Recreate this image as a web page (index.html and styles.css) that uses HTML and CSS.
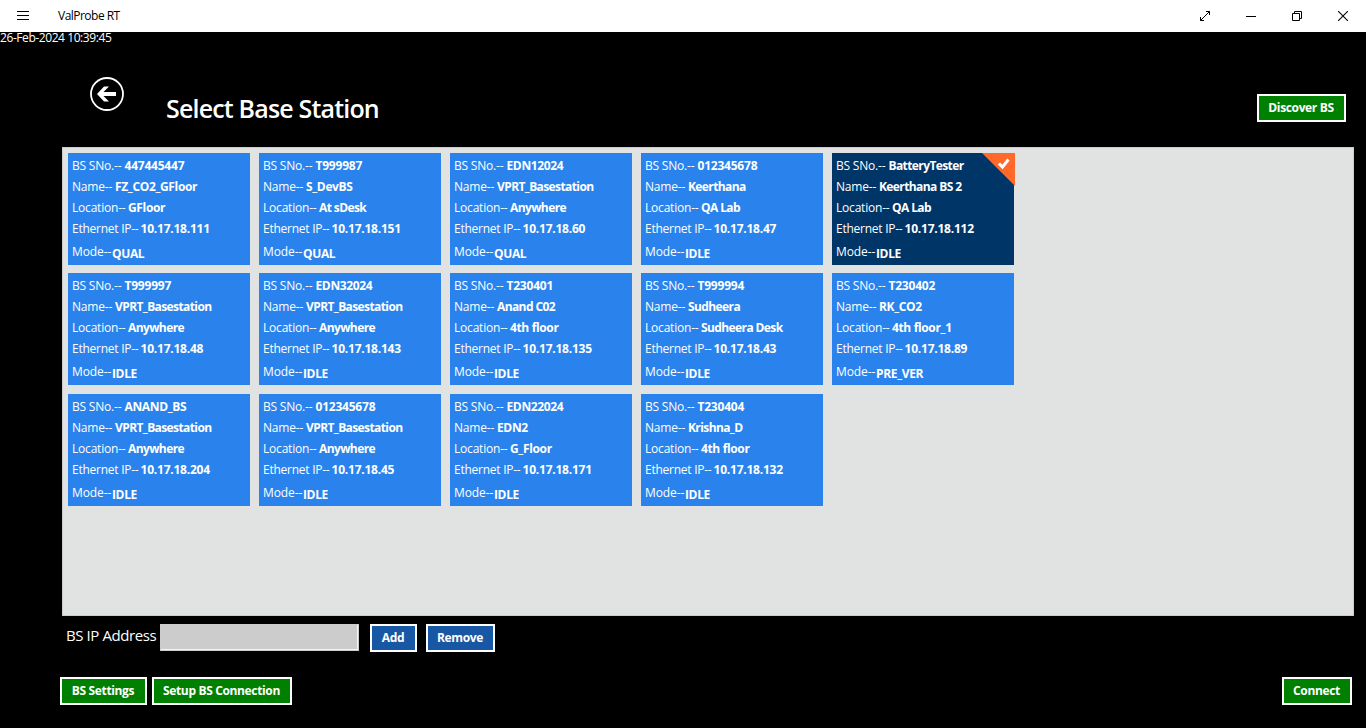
FILE: index.html
```html
<!DOCTYPE html>
<html lang="en">
<head>
<meta charset="utf-8">
<title>ValProbe RT</title>
<link rel="stylesheet" href="styles.css">
</head>
<body>
<header class="titlebar">
  <svg class="menu" width="12" height="10" viewBox="0 0 12 10" shape-rendering="crispEdges"><path d="M0 .5H12M0 4.5H12M0 8.5H12" stroke="#000"/></svg>
  <span class="app-name">ValProbe RT</span>
  <div class="window-controls">
    <svg width="10" height="10" viewBox="0 0 10 10" fill="none" stroke="#000"><path d="M.5 9.5 9.5.5M6 .5H9.5V4M.5 6V9.5H4"/></svg>
    <svg width="10" height="10" viewBox="0 0 10 10" stroke="#000" shape-rendering="crispEdges"><path d="M0 5.5H10"/></svg>
    <svg width="10" height="10" viewBox="0 0 10 10" fill="none" stroke="#000"><path d="M.5 2.5H7.5V9.5H.5ZM2.5 2.5V.5H9.5V7.5H7.5"/></svg>
    <svg width="10" height="10" viewBox="0 0 10 10" stroke="#000" stroke-width="1.1"><path d="M0 0 10 10M10 0 0 10"/></svg>
  </div>
</header>
<main>
  <div class="clock">26-Feb-2024 10:39:45</div>
  <div class="heading">
    <svg class="back" width="34" height="34" viewBox="0 0 34 34"><circle cx="17" cy="17" r="16" fill="none" stroke="#fff" stroke-width="1.8"/><path d="M7 17 14 9.5H19L13.5 15H26V19H13.5L19 24.5H14Z" fill="#fff"/></svg>
    <h1>Select Base Station</h1>
    <button class="btn green discover">Discover BS</button>
  </div>
  <section class="panel" id="stations"></section>
  <div class="address">
    <label for="ip">BS IP Address</label>
    <input id="ip" type="text">
    <button class="btn blue add">Add</button>
    <button class="btn blue remove">Remove</button>
  </div>
  <footer>
    <button class="btn green settings">BS Settings</button>
    <button class="btn green setup">Setup BS Connection</button>
    <button class="btn green connect">Connect</button>
  </footer>
</main>
<script src="stations.js"></script>
</body>
</html>
```
FILE: styles.css
```css
* { box-sizing: border-box; }
body { margin: 0; width: 1366px; height: 728px; overflow: hidden; background: #000; color: #fff; font-family: "Open Sans", "Noto Sans", sans-serif; font-size: 12px; }
svg { display: block; flex: none; }
.titlebar { height: 32px; background: #fff; color: #000; display: flex; align-items: center; padding-left: 17px; }
.app-name { margin: -1px 0 0 29px; font-size: 12px; letter-spacing: -.52px; }
.window-controls { margin-left: auto; display: flex; gap: 36px; padding-right: 18px; }
.clock { height: 16px; line-height: 12px; letter-spacing: -.42px; white-space: nowrap; }
.heading { height: 99px; display: flex; align-items: flex-start; padding: 29px 20px 0 90px; }
h1 { margin: 13px 0 0 42px; font-size: 25px; line-height: 36px; font-weight: 600; letter-spacing: -.82px; white-space: nowrap; }
.btn { height: 28px; border: 2px solid #fff; padding: 0 1px 0 0; font: 700 12px/22px "Open Sans", "Noto Sans", sans-serif; letter-spacing: -.35px; color: #fff; white-space: nowrap; }
.green { background: #008000; }
.blue { background: #1857a4; }
.discover { width: 89px; margin: 17px 0 0 auto; }
.panel { width: 1292px; height: 469px; margin-left: 62px; background: #e1e3e2; border: 1px solid #cbcdcc; display: grid; grid-template-columns: repeat(6, 182px); grid-auto-rows: 112px; gap: 8.4px 9px; padding: 5px; align-content: start; }
.card { position: relative; background: #2a83ec; padding: 2px 4px; white-space: nowrap; }
.card.selected { background: #003568; }
.row { display: flex; height: 21px; line-height: 21px; letter-spacing: -.2px; }
.row b { font-weight: 700; letter-spacing: -.6px; }
.row b.numeric { letter-spacing: -.22px; }
.row b.code { letter-spacing: -.35px; }
.sno span { width: 52.5px; }
.name span { width: 43px; }
.location span { width: 56px; }
.ip span { width: 68.5px; letter-spacing: -.25px; }
.mode { padding-top: 2px; }
.mode span { width: 40px; letter-spacing: -.1px; }
.mode b { padding-top: 2px; line-height: 21px; }
.check { position: absolute; top: 0; right: -1px; }
.address { height: 61px; display: flex; align-items: flex-start; padding: 8px 0 0 66px; }
.address label { width: 94px; font-size: 15px; line-height: 22px; letter-spacing: -.42px; white-space: nowrap; }
.address input { width: 199px; height: 27px; background: #ccc; border: 1px solid #ccc; box-shadow: inset -1px -1px #f4f4f4; padding: 0; }
.add { width: 47px; margin-left: 11px; }
.remove { width: 69px; margin-left: 9px; }
footer { display: flex; padding: 0 14px 0 60px; gap: 5px; }
.settings { width: 87px; }
.setup { width: 140px; }
.connect { width: 70px; margin-left: auto; }
```
FILE: stations.js
```js
const stations = [
  ["447445447", "FZ_CO2_GFloor", "GFloor", "10.17.18.111", "QUAL"],
  ["T999987", "S_DevBS", "At sDesk", "10.17.18.151", "QUAL"],
  ["EDN12024", "VPRT_Basestation", "Anywhere", "10.17.18.60", "QUAL"],
  ["012345678", "Keerthana", "QA Lab", "10.17.18.47", "IDLE"],
  ["BatteryTester", "Keerthana BS 2", "QA Lab", "10.17.18.112", "IDLE"],
  null,
  ["T999997", "VPRT_Basestation", "Anywhere", "10.17.18.48", "IDLE"],
  ["EDN32024", "VPRT_Basestation", "Anywhere", "10.17.18.143", "IDLE"],
  ["T230401", "Anand C02", "4th floor", "10.17.18.135", "IDLE"],
  ["T999994", "Sudheera", "Sudheera Desk", "10.17.18.43", "IDLE"],
  ["T230402", "RK_CO2", "4th floor_1", "10.17.18.89", "PRE_VER"],
  null,
  ["ANAND_BS", "VPRT_Basestation", "Anywhere", "10.17.18.204", "IDLE"],
  ["012345678", "VPRT_Basestation", "Anywhere", "10.17.18.45", "IDLE"],
  ["EDN22024", "EDN2", "G_Floor", "10.17.18.171", "IDLE"],
  ["T230404", "Krishna_D", "4th floor", "10.17.18.132", "IDLE"]
];
const fields = [["sno", "BS SNo.--"], ["name", "Name--"], ["location", "Location--"], ["ip", "Ethernet IP--"], ["mode", "Mode--"]];
const selected = 4;
const check = '<svg class="check" width="33" height="33" viewBox="0 0 33 33"><path d="M0 0H33V33Z" fill="#ff6a2b"/><path d="M17 10.5 20.5 14 26.5 6.5" fill="none" stroke="#fff" stroke-width="3"/></svg>';
const textClass = s => /^[A-Z]?[\d.]+$/.test(s) ? "numeric" : /^([A-Z\d_]+|\d.*|[A-Z]+_.*|FZ.*|GFloor)$/.test(s) && !s.startsWith("VPRT") ? "code" : "";
document.getElementById("stations").innerHTML = stations.map((s, i) => s
  ? `<article class="card${i === selected ? " selected" : ""}">` +
    fields.map(([key, label], f) => `<div class="row ${key}"><span>${label}</span><b class="${textClass(s[f])}">${s[f]}</b></div>`).join("") +
    (i === selected ? check : "") + "</article>"
  : "<div></div>").join("");
```
